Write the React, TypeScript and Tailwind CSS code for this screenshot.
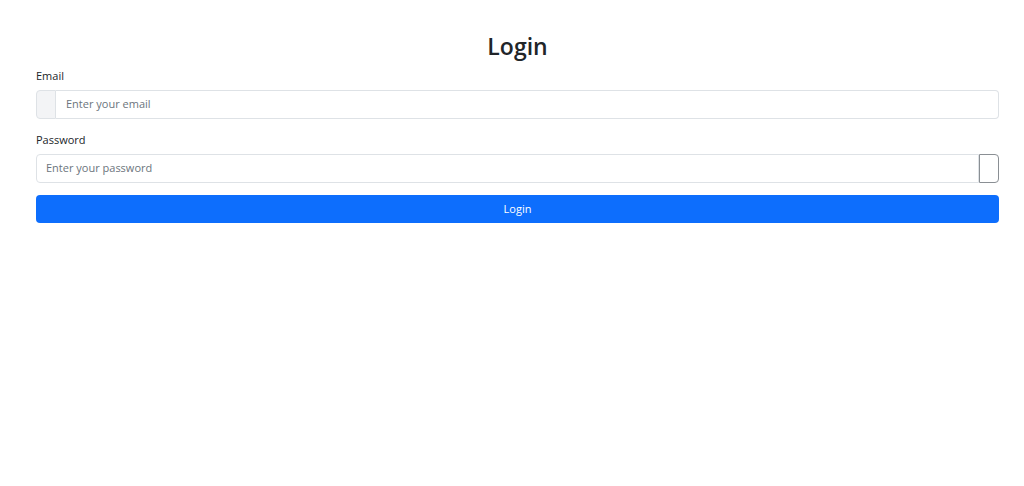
export default function App() {
  return (
    <div
      className="min-h-[486px] w-full bg-white text-[#212529]"
      style={{ fontFamily: '"Open Sans", "Noto Sans", sans-serif' }}
    >
      <div className="ml-[36px] w-[963px] pt-[32px]">
        <h2 className="text-center text-[23px] leading-[28px] font-semibold">Login</h2>
        <form className="mt-[8px]">
          <label className="block text-[11px] leading-[16px] mb-[6px]">Email</label>
          <div className="flex h-[29px]">
            <span className="w-[20px] border border-[#dee2e6] bg-[#f3f4f6] rounded-l-[4px]"></span>
            <input
              type="email"
              placeholder="Enter your email"
              className="flex-1 border border-l-0 border-[#dee2e6] rounded-r-[4px] px-[10px] text-[11px] placeholder:text-[#6c757d] outline-none"
            />
          </div>
          <label className="block text-[11px] leading-[16px] mt-[13px] mb-[6px]">Password</label>
          <div className="flex h-[29px]">
            <input
              type="password"
              placeholder="Enter your password"
              className="flex-1 border border-[#dee2e6] rounded-l-[4px] px-[9px] text-[11px] placeholder:text-[#6c757d] outline-none"
            />
            <button
              type="button"
              className="w-[20px] border border-[#8a8f94] rounded-r-[4px] bg-white"
            ></button>
          </div>
          <button
            type="submit"
            className="mt-[12px] w-full h-[28px] rounded-[4px] bg-[#0d6efd] text-white text-[11px]"
          >
            Login
          </button>
        </form>
      </div>
    </div>
  );
}
